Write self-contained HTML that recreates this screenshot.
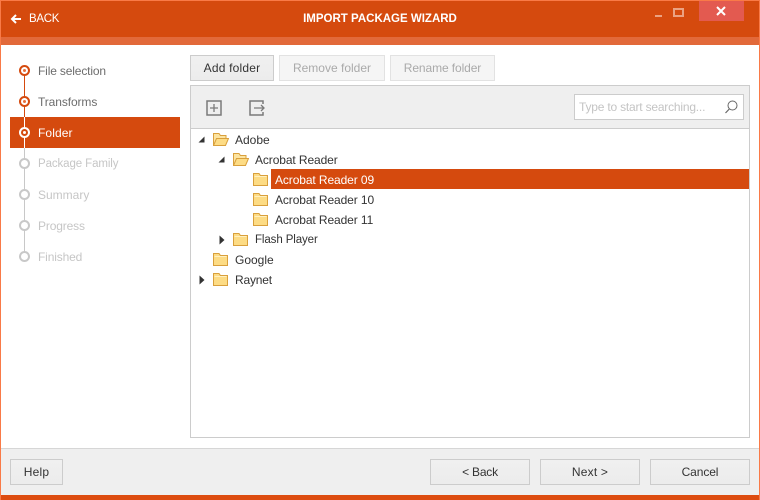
<!DOCTYPE html>
<html><head><meta charset="utf-8"><style>
*{box-sizing:border-box}
html,body{margin:0;padding:0}
body{width:760px;height:500px;position:relative;overflow:hidden;background:#fff;font-family:"Liberation Sans",sans-serif;font-size:12px;color:#333}
.a{position:absolute}
.t{position:absolute;white-space:nowrap;line-height:16px;letter-spacing:0}
.btn{position:absolute;height:26px;border:1px solid #ccc;background:linear-gradient(#f0f0f0,#ececec);text-align:center;line-height:24px;letter-spacing:0;color:#333}
.dis{background:#f5f5f5;border-color:#e2e2e2;color:#aaa}
.s{position:absolute;left:38px;white-space:nowrap;line-height:16px;letter-spacing:0;color:#6d6d6d}
.off{color:#c6c6c6}
.d{position:absolute;left:19px;width:11px;height:11px;border-radius:50%;border:2px solid #d54a0e;background:#fff}
.d i{position:absolute;left:2px;top:2px;width:3px;height:3px;border-radius:50%;background:#e8703c}
.d.g{border-color:#c8c8c8}
.f{position:absolute;width:15px;height:13px}
.o{position:absolute;width:16px;height:13px}
</style></head><body>
<svg width="0" height="0" style="position:absolute"><defs>
<symbol id="fc" viewBox="0 0 15 13"><path d="M.5 12.500V.5h5.500l1.500 2h7v10z" fill="#fddc85" stroke="#d9a03c"/><path d="M1.500 3.500h12" stroke="#fff0c0"/></symbol>
<symbol id="fo" viewBox="0 0 16 13"><path d="M.5 12.500V.5h5.500l1.500 2h5.500v2.500" fill="#fce4a0" stroke="#d9a03c"/><path d="M.5 12.500l3-7h12l-3 7z" fill="#fddc85" stroke="#d9a03c"/></symbol>
</defs></svg>

<div class="a" style="left:0;top:0;width:760px;height:37px;background:#d54a0e"></div>
<div class="a" style="left:0;top:37px;width:760px;height:8px;background:#e2693a"></div>
<div class="a" style="left:0;top:0;width:760px;height:1px;background:#f97a47"></div>
<svg class="a" style="left:10px;top:13px" width="12" height="12" viewBox="0 0 12 12"><path d="M11 6H2M6 2L2 6l4 4" fill="none" stroke="#fff" stroke-width="2"/></svg>
<div class="t" style="left:29px;top:11px;color:#fff;font-size:11.500px;letter-spacing:-.3px">BACK</div>
<div class="t" style="left:0;width:760px;top:11px;text-align:center;color:#fff;font-weight:bold;letter-spacing:0;font-size:11.500px">IMPORT PACKAGE WIZARD</div>
<div class="a" style="left:655px;top:15px;width:7px;height:2px;background:#eba282"></div>
<div class="a" style="left:673px;top:8px;width:11px;height:9px;border:2px solid #eba282"></div>
<div class="a" style="left:699px;top:1px;width:45px;height:20px;background:#e35a50"></div>
<svg class="a" style="left:716px;top:6px" width="10" height="10" viewBox="0 0 10 10"><path d="M1 1l8 8M9 1l-8 8" stroke="#fff" stroke-width="2"/></svg>

<!-- sidebar -->
<div class="a" style="left:10px;top:117px;width:170px;height:31px;background:#d54a0e"></div>
<div class="a" style="left:24px;top:71px;width:1px;height:46px;background:#d54a0e"></div>
<div class="a" style="left:24px;top:117px;width:1px;height:16px;background:#fff"></div>
<div class="a" style="left:24px;top:133px;width:1px;height:15px;background:#fff"></div>
<div class="a" style="left:24px;top:148px;width:1px;height:109px;background:#c8c8c8"></div>
<div class="d" style="top:65px"><i></i></div>
<div class="d" style="top:96px"><i></i></div>
<div class="d" style="top:127px;border-color:#fff;background:#d54a0e"><i style="background:#fff"></i></div>
<div class="d g" style="top:158px"></div>
<div class="d g" style="top:189px"></div>
<div class="d g" style="top:220px"></div>
<div class="d g" style="top:251px"></div>
<div class="s" style="top:63px;letter-spacing:-.15px">File selection</div>
<div class="s" style="top:94px;letter-spacing:-.1px">Transforms</div>
<div class="s" style="top:125px;color:#fff;letter-spacing:.1px">Folder</div>
<div class="s off" style="top:156px;font-size:11.500px;letter-spacing:-.1px">Package Family</div>
<div class="s off" style="top:187px">Summary</div>
<div class="s off" style="top:218px;letter-spacing:-.15px">Progress</div>
<div class="s off" style="top:249px;letter-spacing:-.15px">Finished</div>

<!-- top buttons -->
<div class="btn" style="left:190px;top:55px;width:84px;letter-spacing:.2px">Add folder</div>
<div class="btn dis" style="left:279px;top:55px;width:106px">Remove folder</div>
<div class="btn dis" style="left:390px;top:55px;width:105px;letter-spacing:-.1px">Rename folder</div>

<!-- panel -->
<div class="a" style="left:190px;top:85px;width:560px;height:353px;border:1px solid #ccc;background:#fff"></div>
<div class="a" style="left:191px;top:86px;width:558px;height:43px;background:#efefef;border-bottom:1px solid #ccc"></div>
<svg class="a" style="left:205px;top:99px" width="18" height="18" viewBox="0 0 18 18"><rect x="2" y="2" width="14" height="14" fill="none" stroke="#7a7a7a" stroke-width="1.500"/><path d="M9 5v8M5 9h8" stroke="#7a7a7a" stroke-width="1.300"/></svg>
<svg class="a" style="left:248px;top:99px" width="18" height="18" viewBox="0 0 18 18"><path d="M15 5V2H2v14h13v-3" fill="none" stroke="#7a7a7a" stroke-width="1.500"/><path d="M6 9h10M13 6l3 3-3 3" fill="none" stroke="#7a7a7a" stroke-width="1.300"/></svg>
<div class="a" style="left:574px;top:94px;width:170px;height:26px;border:1px solid #ccc;background:#fff"></div>
<div class="t" style="left:579px;top:99px;color:#c4c4c4;letter-spacing:-.2px">Type to start searching...</div>
<svg class="a" style="left:724px;top:100px" width="15" height="15" viewBox="0 0 15 15"><circle cx="8.500" cy="5.500" r="4.500" fill="none" stroke="#666" stroke-width="1"/><path d="M5.300 9L1.500 13" stroke="#666" stroke-width="1.200"/></svg>

<!-- tree -->
<div class="a" style="left:271px;top:169px;width:478px;height:20px;background:#d54a0e"></div>
<svg class="a" style="left:198px;top:136px" width="7" height="7"><path d="M6.500.5v6h-6z" fill="#333"/></svg>
<svg class="o" style="left:213px;top:133px"><use href="#fo"/></svg><div class="t" style="left:235px;top:132px">Adobe</div>
<svg class="a" style="left:218px;top:156px" width="7" height="7"><path d="M6.500.5v6h-6z" fill="#333"/></svg>
<svg class="o" style="left:233px;top:153px"><use href="#fo"/></svg><div class="t" style="left:255px;top:152px;letter-spacing:-.1px">Acrobat Reader</div>
<svg class="f" style="left:253px;top:173px"><use href="#fc"/></svg><div class="t" style="left:275px;top:172px;color:#fff;letter-spacing:-.1px">Acrobat Reader 09</div>
<svg class="f" style="left:253px;top:193px"><use href="#fc"/></svg><div class="t" style="left:275px;top:192px;letter-spacing:-.1px">Acrobat Reader 10</div>
<svg class="f" style="left:253px;top:213px"><use href="#fc"/></svg><div class="t" style="left:275px;top:212px;letter-spacing:-.1px">Acrobat Reader 11</div>
<svg class="a" style="left:219px;top:235px" width="6" height="10"><path d="M.5.5l5 4.500-5 4.500z" fill="#333"/></svg>
<svg class="f" style="left:233px;top:233px"><use href="#fc"/></svg><div class="t" style="left:255px;top:232px;font-size:11.500px;letter-spacing:-.1px">Flash Player</div>
<svg class="f" style="left:213px;top:253px"><use href="#fc"/></svg><div class="t" style="left:235px;top:252px">Google</div>
<svg class="a" style="left:199px;top:275px" width="6" height="10"><path d="M.5.5l5 4.500-5 4.500z" fill="#333"/></svg>
<svg class="f" style="left:213px;top:273px"><use href="#fc"/></svg><div class="t" style="left:235px;top:272px;letter-spacing:-.2px">Raynet</div>

<!-- footer -->
<div class="a" style="left:0;top:448px;width:760px;height:47px;background:#efefef;border-top:1px solid #d6d6d6"></div>
<div class="a" style="left:0;top:495px;width:760px;height:5px;background:#dd4c10"></div>
<div class="btn" style="left:10px;top:459px;width:53px;letter-spacing:.2px">Help</div>
<div class="btn" style="left:430px;top:459px;width:100px;letter-spacing:-.2px">&lt; Back</div>
<div class="btn" style="left:540px;top:459px;width:100px;letter-spacing:.2px">Next &gt;</div>
<div class="btn" style="left:650px;top:459px;width:100px;letter-spacing:-.1px">Cancel</div>

<!-- window border -->
<div class="a" style="left:0;top:0;width:1px;height:500px;background:#f97a47"></div>
<div class="a" style="left:759px;top:0;width:1px;height:500px;background:#f97a47"></div>
</body></html>
